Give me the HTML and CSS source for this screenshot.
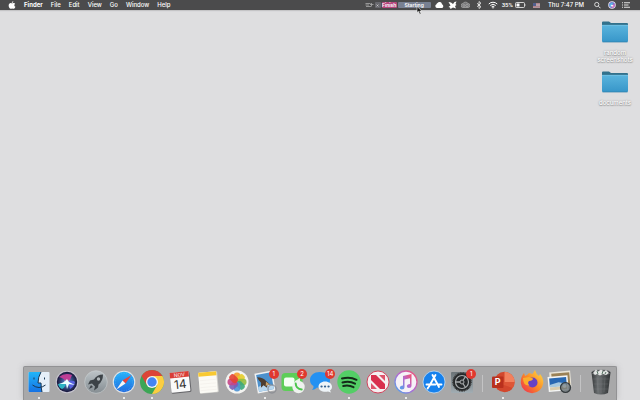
FILE: index.html
```html
<!DOCTYPE html>
<html lang="en">
<head>
<meta charset="utf-8">
<title>Desktop</title>
<link rel="stylesheet" href="styles.css">
</head>
<body>
<header class="menubar">
  <nav class="menus">
    <button class="menu apple" aria-label="Apple"><svg width="8" height="8" viewBox="0 0 16 16"><path fill="#fff" d="M10.6 0.3c.1 1.800-1.300 3.500-3 3.500-.2-1.700 1.300-3.300 3-3.500zM8.100 4.700c.8 0 1.700-.8 3.100-.8 1.400 0 2.500.7 3.100 1.600-2.500 1.500-2.100 4.900.5 6-.7 1.900-2 4.100-3.500 4.100-1.200 0-1.600-.7-3-.7s-1.900.7-3 .7C3.500 15.600 1.300 12.200 1.300 9c0-3.300 2-5.100 4.100-5.100 1.200 0 2.100.8 2.700.8z"/></svg></button>
    <button class="menu app">Finder</button>
    <button class="menu">File</button>
    <button class="menu">Edit</button>
    <button class="menu">View</button>
    <button class="menu">Go</button>
    <button class="menu">Window</button>
    <button class="menu">Help</button>
  </nav>
  <div class="status">
    <div class="tasks">
      <svg width="9" height="6" viewBox="0 0 18 12"><path d="M1 3h10M1 6h7M2 9h10M13 2v7M10 5h7" stroke="#aaa" stroke-width="1.600" fill="none"/></svg>
      <span class="chip close"><svg width="3" height="3" viewBox="0 0 6 6"><path d="M1 1l4 4M5 1L1 5" stroke="#ddd" stroke-width="1.200"/></svg></span>
      <button class="chip finish">Finish</button>
      <button class="chip starting">Starting</button>
    </div>
    <svg width="9" height="8" viewBox="1 0 18 16"><path fill="#fff" d="M5 14a4 4 0 0 1-1-7.600 3 3 0 0 1 2-2.400 5 5 0 0 1 9 2.500 4 4 0 0 1 0 7.500z"/></svg>
    <svg width="9" height="8" viewBox="0 0 18 16"><path fill="#fff" d="M1 2l5 1 4 3 3-4 4-1-2 5 2 2-3 2 2 5-6-2-5 3-1-3-3-1 4-3z"/></svg>
    <svg width="9" height="8" viewBox="1 0 18 16"><path fill="#77777a" stroke="#aaa" stroke-width="1.500" d="M5 13a4 4 0 0 1 0-8 6 6 0 0 1 10 0 4 4 0 0 1 0 8z"/><circle cx="7" cy="9" r="2" fill="none" stroke="#bbb"/><circle cx="13" cy="9" r="2.500" fill="none" stroke="#bbb"/></svg>
    <svg class="bluetooth" width="6" height="8" viewBox="0 0 12 16"><path d="M2 4.500l8 7L6 15V1l4 3.500-8 7" fill="none" stroke="#fff" stroke-width="1.500"/></svg>
    <svg width="10" height="8" viewBox="0 0 20 16"><path d="M1.500 6a12 12 0 0 1 17 0M4.500 9a8 8 0 0 1 11 0M7.200 11.600a4 4 0 0 1 5.600 0" fill="none" stroke="#fff" stroke-width="2"/><circle cx="10" cy="13.500" r="1.500" fill="#fff"/></svg>
    <span class="battery">35%<svg width="11" height="6" viewBox="0 0 22 12"><rect x="1" y="1" width="18" height="10" rx="2" fill="none" stroke="#fff" stroke-width="1.500"/><path fill="#fff" d="M3 3h6v6H3zM20 4q2 2 0 4z"/></svg></span>
    <svg class="flag" width="7" height="5" viewBox="0 0 14 10"><path fill="#c3bcc2" d="M0 0h14v10H0z"/><path stroke="#a36670" stroke-width="1.300" d="M0 1h14M0 4h14M0 7h14M0 9.500h14"/><path fill="#525f8e" d="M0 0h6v6H0z"/></svg>
    <time class="clock">Thu 7:47 PM</time>
    <svg width="7" height="8" viewBox="0 0 14 16"><circle cx="5.500" cy="7" r="4.200" fill="none" stroke="#fff" stroke-width="1.500"/><path d="M9 10.500l4 4" stroke="#fff" stroke-width="1.800"/></svg>
    <svg class="siri" width="8" height="8" viewBox="0 0 16 16"><circle cx="8" cy="8" r="7.500" fill="#e8e8f4"/><circle cx="8" cy="8" r="6" fill="#7d72c8"/><path fill="#53b9e6" d="M2 8q4-6 8-5-1 5-5 9z"/><path fill="#dd72b4" d="M8 14q-1-5 5-8 2 5-5 8z"/><path fill="#fff" d="M5 10l3-3 3 3-3 1z"/></svg>
    <svg width="8" height="8" viewBox="0 0 16 16"><path d="M0 3.500h2M0 8h2M0 12.500h2M4 3.500h12M4 8h9M4 12.500h12" stroke="#fff" stroke-width="1.700"/></svg>
  </div>
  <svg class="cursor" width="7" height="9" viewBox="0 0 14 18"><path fill="#111" stroke="#eee" stroke-width="1.200" d="M2 1v12l3-2.500 2.500 6 2.500-1-2.500-5.500H12z"/></svg>
</header>

<main class="desktop">
  <button class="file">
    <svg width="28" height="22" viewBox="0 0 28 22"><use href="#folder"/></svg>
    <span>random<br>screenshots</span>
  </button>
  <button class="file">
    <svg width="28" height="22" viewBox="0 0 28 22"><defs>
      <linearGradient id="fold" x2="0" y2="1"><stop stop-color="#5ab4dd"/><stop offset="1" stop-color="#3796c9"/></linearGradient>
      <g id="folder"><path fill="#32718c" d="M1 1.500q0-1 1-1h6l2 1.500h16q1 0 1 1V8H1z"/><path fill="url(#fold)" d="M1 4h26v16q0 1-1 1H2q-1 0-1-1z"/><path stroke="#83cbe8" stroke-width=".6" d="M1 4.300h26"/><path stroke="#2e7fab" stroke-width=".7" d="M1.500 21h25"/></g>
    </defs><use href="#folder"/></svg>
    <span>documents</span>
  </button>
</main>

<footer class="dock">
  <button class="item open" aria-label="Finder"><svg viewBox="0 0 26 26"><defs><linearGradient id="fi" x2="0" y2="1"><stop stop-color="#20b5f8"/><stop offset="1" stop-color="#1672e4"/></linearGradient></defs><rect x="2.500" y="3" width="21" height="20" rx="1" fill="#e5eff8"/><path fill="url(#fi)" d="M3.500 3H15q-3 5-3 11h3q0 5 1 9H3.500q-1 0-1-1V4q0-1 1-1z"/><path d="M8 8.500v2M18.500 8.500v2M6.500 16q6.500 5 13 0M15 3q-3 5-3 11h3q0 5 1 9" fill="none" stroke="#183653" stroke-width="1"/></svg></button>
  <button class="item" aria-label="Siri"><svg viewBox="0 0 26 26"><defs><radialGradient id="si"><stop stop-color="#fff"/><stop offset=".35" stop-color="#4569a8"/><stop offset="1" stop-color="#161337"/></radialGradient></defs><circle cx="13" cy="13" r="11.300" fill="#c5c4ce"/><circle cx="13" cy="13" r="10.200" fill="url(#si)"/><path fill="#be3e96" d="M5 8q6-5 13-2l-2 5-4 2q-2-4-7-5z"/><path fill="#2bb3c4" d="M4 15q5 0 9-3-2 7-5 8-3-1-4-5z"/><path fill="#5a62df" d="M14 12q6-1 7 1-1 5-5 7z"/><path fill="#e9ffff" d="M5 15q5-1 8-5l2 3 6 3-6-1-2 5-1-5z"/></svg></button>
  <button class="item" aria-label="Launchpad"><svg viewBox="0 0 26 26"><defs><linearGradient id="la" x2="0" y2="1"><stop stop-color="#bdc4c8"/><stop offset="1" stop-color="#858d92"/></linearGradient></defs><circle cx="13" cy="13" r="11.300" fill="url(#la)" stroke="#cbd0d2" stroke-width=".6"/><path fill="#3c4247" d="M20 5.500q-6 0-9 5l-4 1-2 4 4-1 3 3-1 4 4-3 .5-3Q20 12 20 5.500zM8 16l-2 4 4-2z"/><circle cx="15.500" cy="10" r="1.700" fill="#b0b7ba"/></svg></button>
  <button class="item open" aria-label="Safari"><svg viewBox="0 0 26 26"><defs><linearGradient id="sa" x2="0" y2="1"><stop stop-color="#26b4fa"/><stop offset="1" stop-color="#216ce0"/></linearGradient></defs><circle cx="13" cy="13" r="11.300" fill="#e0e3e6"/><circle cx="13" cy="13" r="10.200" fill="url(#sa)"/><circle cx="13" cy="13" r="8.700" fill="none" stroke="#7cc4f6" stroke-width=".7" stroke-dasharray=".4 1.400"/><path fill="#eb4339" d="M20.500 6l-6 8.500-3-3z"/><path fill="#f5f5f5" d="M5.500 20.500l6-9 3 3z"/></svg></button>
  <button class="item open" aria-label="Chrome"><svg viewBox="0 0 26 26"><circle cx="13" cy="13" r="12" fill="#3ca655"/><path fill="#dc4437" d="M2.600 7A12 12 0 0 1 23.400 7H13l-5.200 9z"/><path fill="#fbcd42" d="M23.400 7A12 12 0 0 1 13 25l5.200-9L13 7z"/><circle cx="13" cy="13" r="6" fill="#f5f5f5"/><circle cx="13" cy="13" r="4.700" fill="#4384f3"/></svg></button>
  <button class="item" aria-label="Calendar"><svg viewBox="0 0 26 26"><g transform="rotate(-6 13 13)"><rect x="3.500" y="3.500" width="20" height="20.500" rx="1.500" fill="#66666a"/><rect x="3.500" y="3" width="19" height="20" rx="1" fill="#fafafa"/><path fill="#d93d36" d="M3.500 3h19v5.500h-19z"/><text class="month" x="13" y="7.600">NOV</text><text class="day" x="13" y="19.500">14</text></g></svg></button>
  <button class="item" aria-label="Notes"><svg viewBox="0 0 26 26"><g transform="rotate(-5 13 13)"><rect x="4" y="3" width="19" height="21" rx="1" fill="#d0cfcb"/><rect x="4" y="3" width="18" height="20.500" rx="1" fill="#fbfaf5"/><path fill="#f8c932" d="M4 3h18v4H4z"/><path d="M5 11h16M5 14.500h16M5 18h16M5 21h16" stroke="#f0eee9" stroke-width=".6"/></g></svg></button>
  <button class="item" aria-label="Photos"><svg viewBox="0 0 26 26"><defs><rect id="petal" x="9.800" y="3.500" width="6.400" height="9.500" rx="3" opacity=".9"/></defs><circle cx="13" cy="13" r="11.500" fill="#f3f3f1"/><use href="#petal" fill="#f69a29"/><use href="#petal" fill="#e5cd2b" transform="rotate(45 13 13)"/><use href="#petal" fill="#92bd41" transform="rotate(90 13 13)"/><use href="#petal" fill="#3ca97c" transform="rotate(135 13 13)"/><use href="#petal" fill="#4c92d4" transform="rotate(180 13 13)"/><use href="#petal" fill="#7a5db8" transform="rotate(225 13 13)"/><use href="#petal" fill="#c54587" transform="rotate(270 13 13)"/><use href="#petal" fill="#e44334" transform="rotate(315 13 13)"/></svg></button>
  <button class="item open" aria-label="Mail"><svg viewBox="0 0 26 26"><g transform="rotate(-10 13 13)"><rect x="4" y="3" width="18" height="20" fill="#f0f1f2"/><rect x="5.500" y="4.500" width="15" height="17" fill="#4c91cd"/><path fill="#b8d7ee" d="M5.500 17l7-3 8 4v3.500h-15z"/><path fill="#4d3d2f" d="M6 7q6 1 8 5l4 5-3-1-1 3-3-3-3 2 1-5q-2-2-3-6z"/><path fill="#c9a36b" d="M14 13l4 4-2-1-3 1z"/></g><circle cx="20" cy="20" r="4" fill="none" stroke="#84888e" stroke-width="1.500" opacity=".7"/></svg><span class="badge">1</span></button>
  <button class="item" aria-label="FaceTime"><svg viewBox="0 0 26 26"><rect x="1.500" y="4" width="21" height="18" rx="4" fill="#5dce58"/><rect x="4" y="8.500" width="10.500" height="9" rx="2" fill="#f4fff3"/><path fill="#e3f6e1" d="M15 12l5-3v8l-5-3z"/><circle cx="18.500" cy="18" r="6.200" fill="#eff2ef"/><path d="M15.700 14.500q.3 5.500 6 6" fill="none" stroke="#4cc74c" stroke-width="2" stroke-linecap="round"/></svg><span class="badge">2</span></button>
  <button class="item" aria-label="Messages"><svg viewBox="0 0 26 26"><path fill="#2491f2" d="M12 3c6 0 10 3.500 10 8s-4 8-10 8l-3-.4Q7 21 4 21q2-2 1.500-4Q2 15 2 11c0-4.500 4-8 10-8z"/><path fill="#eef4f8" d="M17 12.500c4 0 7 2.300 7 5.200 0 1.600-.8 3-2 3.800l1 2-3-1c-5 1-9.500-1-9.500-4.800 0-2.900 2.700-5.200 6.500-5.200z"/><path d="M13.500 17.500h.1M17 17.500h.1M20.500 17.500h.1" stroke="#35618f" stroke-width="2.200" stroke-linecap="round"/></svg><span class="badge">14</span></button>
  <button class="item open" aria-label="Spotify"><svg viewBox="0 0 26 26"><circle cx="13" cy="13" r="11.700" fill="#53ce66"/><path d="M6 9.500q8-2.200 14.500 1.300M6.500 13.500q7-2 12.500 1.200M7.200 17q5.500-1.400 10.300 1.200" fill="none" stroke="#142b19" stroke-width="2" stroke-linecap="round"/></svg></button>
  <button class="item" aria-label="News"><svg viewBox="0 0 26 26"><circle cx="13" cy="13" r="11" fill="#f5f0f1" stroke="#d3425b" stroke-width="1"/><path fill="#d92f4d" d="M6 6h5l9 9v5h-5l-9-9z"/><path fill="#df536a" d="M14 6h6v6zM6 14v6h6z"/></svg></button>
  <button class="item open" aria-label="Music"><svg viewBox="0 0 26 26"><defs><linearGradient id="mu" x1="1" x2="0" y2="1"><stop stop-color="#f8506b"/><stop offset=".5" stop-color="#b269d2"/><stop offset="1" stop-color="#46a9ef"/></linearGradient></defs><circle cx="13" cy="13" r="11" fill="#f5f1f7" stroke="url(#mu)" stroke-width="1.300"/><path fill="url(#mu)" d="M10 7l8.500-2v11.500q0 2.500-2.700 2.500-2 0-2-1.700 0-1.800 3.200-2.300V9.200l-5.500 1.300V18q0 2.500-2.700 2.500-2 0-2-1.700 0-1.800 3.200-2.300z"/></svg></button>
  <button class="item" aria-label="App Store"><svg viewBox="0 0 26 26"><circle cx="13" cy="13" r="11" fill="#1681ed" stroke="#d9e8f5" stroke-width=".7"/><path d="M14.500 6L8 17.500M11.500 6L18 18M5.500 15.500h9M17 15.500h3.500M7.200 18.500l-.6 1" fill="none" stroke="#fff" stroke-width="1.900" stroke-linecap="round"/></svg></button>
  <button class="item" aria-label="System Preferences"><svg viewBox="0 0 26 26"><defs><linearGradient id="sy" x2="0" y2="1"><stop stop-color="#6b7377"/><stop offset="1" stop-color="#a2adb3"/></linearGradient></defs><rect x="2" y="3" width="22" height="21" rx="1" fill="url(#sy)"/><circle cx="13" cy="13" r="9" fill="#25282a" stroke="#333" stroke-width="1.500" stroke-dasharray="1 .6"/><circle cx="13" cy="13" r="6.500" fill="none" stroke="#a8abad" stroke-width="1.200"/><path d="M13 13H6.500M13 13l3.500-5.500M13 13l3.500 5.500" stroke="#a8abad" stroke-width="1.300"/><circle cx="13" cy="13" r="2" fill="#303335" stroke="#a8abad"/></svg><span class="badge">1</span></button>
  <span class="divider"></span>
  <button class="item open" aria-label="PowerPoint"><svg viewBox="0 0 26 26"><circle cx="14.500" cy="13" r="10.200" fill="#d2472d"/><path fill="#f2805d" d="M14.500 2.800A10.200 10.200 0 0 1 24.700 13H14.500z"/><path fill="#e6603d" d="M4.300 13h20.400a10.200 10.200 0 0 1-2 6z" opacity=".6"/><rect x="2" y="7.500" width="11.500" height="11.500" rx="1" fill="#b9301d"/><text class="letter" x="7.700" y="16.300">P</text></svg></button>
  <button class="item" aria-label="Firefox"><svg viewBox="0 0 26 26"><defs><linearGradient id="ff" x1="1" x2="0" y2="1"><stop stop-color="#ffe24b"/><stop offset=".5" stop-color="#fb8a25"/><stop offset="1" stop-color="#ec2555"/></linearGradient></defs><path fill="url(#ff)" d="M13.500 5l2.500-4q1 4 4 6l1-2q3.500 4 3.300 9A11.300 11.300 0 0 1 1.800 14Q1.500 8 5 4l1 3q2-.5 4-3z"/><circle cx="13.500" cy="13.500" r="5" fill="#6541c4"/><path fill="#fbad2c" d="M4 9l6-1 4 1.500q0 2-4 2.500-2 2 .5 4.500Q4 17 4 9z"/></svg></button>
  <button class="item" aria-label="Preview"><svg viewBox="0 0 26 26"><g transform="rotate(-5 13 13)"><rect x="3" y="2.500" width="21" height="16" fill="#e9e5d9"/><path fill="#9b8257" d="M5 4h18v12H5z"/><rect x="1" y="7" width="20" height="15" fill="#f4f5f5"/><path fill="#2868b2" d="M2.500 8.500h17v8h-17z"/><path fill="#a7c9df" d="M2.500 15l9-2 8 2v2.500h-17z"/><path fill="#d9cdae" d="M2.500 17.500h17v3h-17z"/></g><circle cx="18.500" cy="18.500" r="5" fill="#596266" fill-opacity=".7" stroke="#343a3d" stroke-width="1.200"/><circle cx="17.500" cy="17" r="2" fill="#a4abad" opacity=".6"/></svg></button>
  <span class="divider"></span>
  <button class="item" aria-label="Trash"><svg viewBox="0 0 26 26"><defs><linearGradient id="tr"><stop stop-color="#36393b"/><stop offset=".35" stop-color="#6c7072"/><stop offset="1" stop-color="#303335"/></linearGradient></defs><path fill="url(#tr)" d="M3.500 3.500h19L20 24q-7 3-14 0z"/><ellipse cx="13" cy="3.500" rx="9.500" ry="2.500" fill="#34373a" stroke="#75797b" stroke-width=".7"/><path fill="#e3e5e4" d="M5 4l3-3.500 2 2L13 .5l3 2 2-1.500 3 3-3 2-3-1-3 1.500L9 5 7 6z"/><path d="M9 2l1 3M15 2l-1 3M18 3l-1 2" stroke="#466655" stroke-width=".9"/><path d="M5 10h16M5.500 15h15M6 20h14M9 8l1 15M13 8v16M17 8l-1 15" stroke="#8d9193" stroke-width=".4" opacity=".6"/></svg></button>
</footer>
</body>
</html>
```
FILE: styles.css
```css
* {
  box-sizing: border-box;
}

body {
  margin: 0;
  min-height: 100vh;
  display: flex;
  flex-direction: column;
  overflow: hidden;
  background: #dedee0;
  font-family: Inter, "Liberation Sans", sans-serif;
  font-size: 6px;
}

button {
  margin: 0;
  padding: 0;
  border: 0;
  background: none;
  color: inherit;
  font: inherit;
}

svg {
  display: block;
  flex: none;
}

.menubar {
  position: relative;
  display: flex;
  justify-content: space-between;
  height: 10px;
  padding: 0 10px 0 8px;
  background: #4b4b4c;
  color: #fff;
  font-weight: 500;
  line-height: 10px;
  white-space: nowrap;
  box-shadow: 0 1px 1px #c4c4c6;
}

.menus,
.status,
.tasks,
.battery {
  display: flex;
  align-items: center;
}

.menus {
  gap: 8px;
}

.menubar .app {
  font-weight: 700;
}

.status {
  gap: 4px;
}

.tasks {
  gap: 1px;
}

.chip {
  display: flex;
  align-items: center;
  justify-content: center;
  height: 6px;
  border-radius: 1px;
  font-size: 5px;
  font-weight: 600;
  line-height: 6px;
}

.close {
  width: 6px;
  background: #68686e;
}

.finish {
  width: 15px;
  background: #b5487e;
}

.starting {
  width: 33px;
  background: #788092;
}

.bluetooth {
  margin: 0 2px;
}

.battery {
  gap: 2px;
  font-family: Roboto, "Liberation Sans", sans-serif;
}

.flag {
  margin: 0 4px 0 3px;
}

.clock {
  margin-right: 6px;
}

.siri {
  margin: 0 2px 0 3px;
}

.cursor {
  position: absolute;
  left: 65%;
  top: 6px;
}

.desktop {
  flex: 1;
  display: flex;
  flex-direction: column;
  align-items: flex-end;
  gap: 8px;
  padding: 11px 4px;
}

.file {
  display: flex;
  flex-direction: column;
  align-items: center;
  gap: 6px;
  width: 42px;
  color: #fff;
  font-weight: 500;
  line-height: 7px;
  text-shadow: 0 1px 1px #999, 0 0 2px #888;
}

.dock {
  display: flex;
  height: 34px;
  margin: 0 23px;
  padding: 2px 1px 0;
  border: 1px solid #929294;
  border-bottom: 0;
  border-radius: 2px 2px 0 0;
  background: #a8a8a9;
  box-shadow: 0 0 6px #bbbbbd;
}

.item {
  position: relative;
  flex: 1;
  display: flex;
  flex-direction: column;
  align-items: center;
  gap: 2px;
}

.item svg {
  width: 26px;
  height: 26px;
}

.open::after {
  content: "";
  width: 2px;
  height: 2px;
  border-radius: 1px;
  background: #fff;
}

.badge {
  position: absolute;
  top: 0;
  right: 0;
  width: 10px;
  height: 10px;
  border-radius: 5px;
  background: #e0382f;
  color: #fff;
  line-height: 10px;
  text-align: center;
}

.divider {
  width: 1px;
  height: 17px;
  margin: 6px 6px 0;
  background: #c3c3c4;
}

.month,
.day,
.letter {
  text-anchor: middle;
}

.month {
  fill: #fff;
  font-size: 5px;
}

.day {
  fill: #333;
  font-size: 12px;
}

.letter {
  fill: #fff;
  font-size: 9px;
  font-weight: 700;
}
```
